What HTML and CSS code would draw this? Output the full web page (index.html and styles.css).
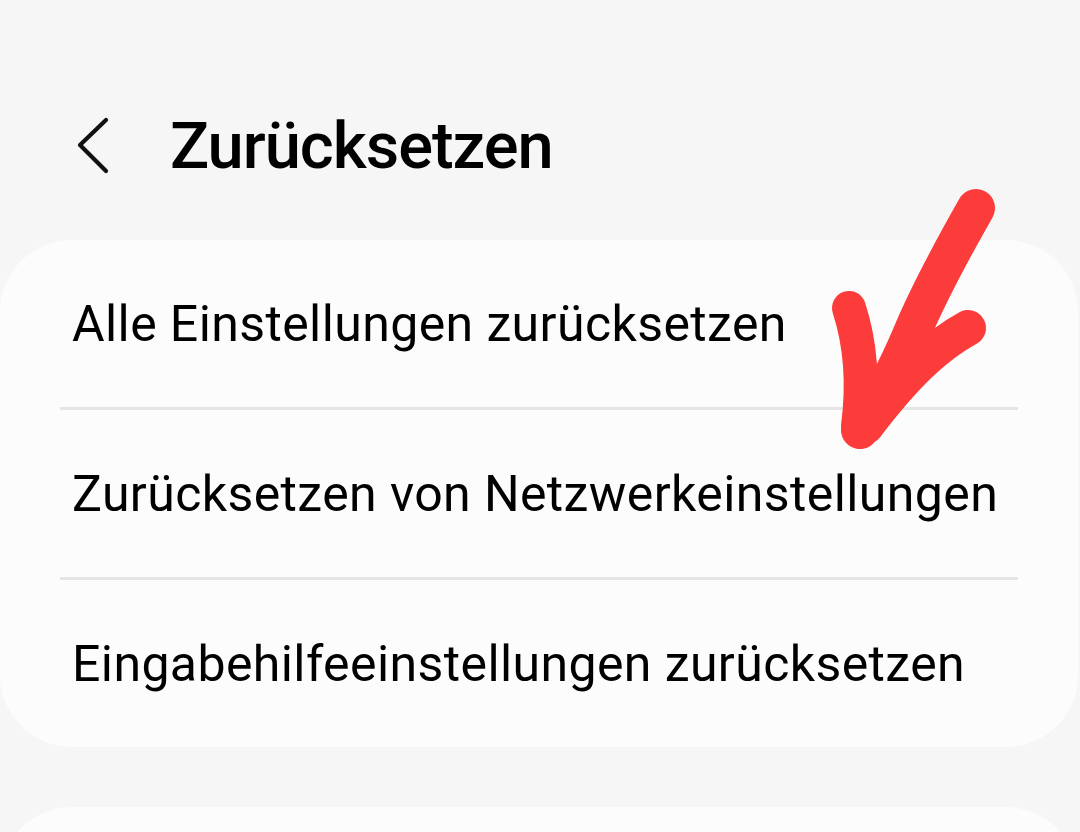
FILE: index.html
```html
<!DOCTYPE html>
<html lang="de">
<head>
<meta charset="utf-8">
<title>Zurücksetzen</title>
<link rel="stylesheet" href="styles.css">
</head>
<body>
<div class="screen">
  <header class="header">
    <button class="back" aria-label="Zurück">
      <svg width="34" height="58" viewBox="0 0 34 58"><path d="M30 3 L4 28 L30 54" fill="none" stroke="#111" stroke-width="4.2" stroke-linecap="round" stroke-linejoin="round"/></svg>
    </button>
    <h1 class="title">Zurücksetzen</h1>
  </header>
  <section class="card">
    <div class="row">Alle Einstellungen zurücksetzen</div>
    <div class="divider"></div>
    <div class="row">Zurücksetzen von Netzwerkeinstellungen</div>
    <div class="divider"></div>
    <div class="row">Eingabehilfeeinstellungen zurücksetzen</div>
  </section>
  <section class="card card-next"></section>
  <svg class="annotation" width="1080" height="832" viewBox="0 0 1080 832">
    <g fill="none" stroke="#fc3b3b" stroke-linecap="round" stroke-linejoin="round">
      <path d="M976 208 C955 245 930 290 912 333 C895 373 878 405 860 430" stroke-width="38"/>
      <path d="M849 308 C860 342 864 380 858 426" stroke-width="34"/>
      <path d="M968 328 C935 346 905 375 866 426" stroke-width="36"/>
    </g>
  </svg>
</div>
</body>
</html>
```
FILE: styles.css
```css
* { box-sizing: border-box; }
html, body {
  margin: 0;
  padding: 0;
  background: #f6f6f6;
}
.screen {
  position: relative;
  width: 1080px;
  height: 832px;
  overflow: hidden;
  background: #f6f6f6;
  font-family: Roboto, "Liberation Sans", sans-serif;
  color: #000;
}
.header {
  display: flex;
  align-items: center;
  height: 188px;
  margin-top: 52px;
  padding-left: 76px;
}
.back {
  display: flex;
  border: 0;
  padding: 0;
  background: none;
  width: 34px;
  height: 58px;
  margin-right: 60px;
}
.title {
  margin: 0;
  font-size: 65px;
  font-weight: 500;
  letter-spacing: -1px;
  line-height: 1;
}
.card {
  margin: 0 2px 0 0;
  background: #fcfcfc;
  border-radius: 72px;
  padding: 0 60px;
}
.row {
  height: 167px;
  display: flex;
  align-items: center;
  padding-left: 12px;
  font-size: 50px;
  font-weight: 400;
  letter-spacing: 0.4px;
  line-height: 1;
}
.divider {
  height: 3px;
  background: #e5e5e5;
}
.card-next {
  margin-top: 60px;
  height: 200px;
}
.annotation {
  position: absolute;
  left: 0;
  top: 0;
  pointer-events: none;
}
```
